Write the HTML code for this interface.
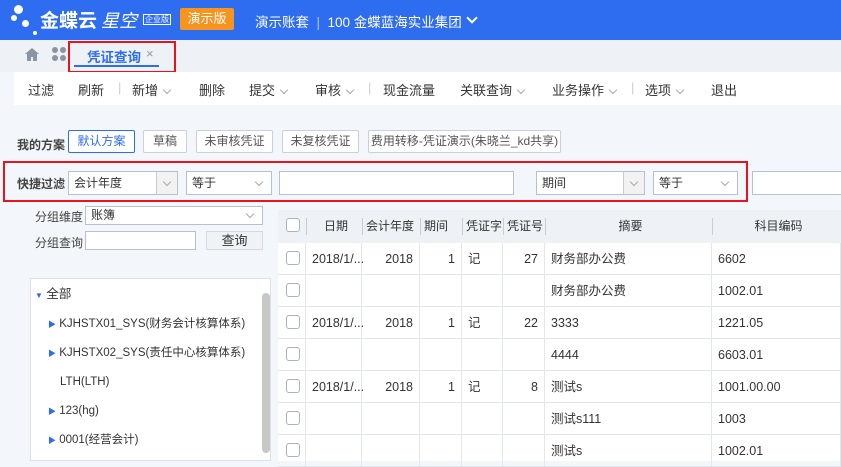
<!DOCTYPE html><html><head><meta charset="utf-8"><style>
*{margin:0;padding:0;box-sizing:border-box}
body{width:841px;height:461px;overflow:hidden;background:#f3f6fa;font-family:"Liberation Sans","Noto Sans CJK SC",sans-serif;font-size:12px;color:#333;position:relative}
.a{position:absolute}
.hd{left:0;top:0;width:841px;height:40px;background:#2e6cf0;color:#fff}
.tb{left:0;top:40px;width:841px;height:32px;background:#eef1f6}
.tool{left:14px;top:72px;width:827px;height:33px;background:#fff;font-size:13px}
.tool span{position:absolute;top:8px}
.cv{display:inline-block;width:6px;height:6px;border-right:1px solid #aaa;border-bottom:1px solid #aaa;transform:rotate(45deg);margin:0 0 4px 6px;vertical-align:middle}
.btn{position:absolute;top:130px;height:23px;border:1px solid #c9d0db;background:#fff;font-size:12px;color:#555;text-align:center;line-height:21px;border-radius:2px}
.inp{position:absolute;height:24px;border:1px solid #b8c0cc;background:#fff;font-size:12px;line-height:22px;padding-left:5px}
.inp .cv{position:absolute;right:9px;top:7px;margin:0}
.dd{position:absolute;right:0;top:0;width:21px;height:22px;border-left:1px solid #ccc;background:#f2f2f2}
.dd .cv{right:7px}
.grid{left:278px;top:210px;width:563px;height:251px;background:#fff}
.cell{position:absolute;height:32px;line-height:32px;font-size:12.5px;border-right:1px solid #e3e6ea;border-bottom:1px solid #e3e6ea}
.cb{position:absolute;width:14px;height:14px;border:1px solid #aab4c0;border-radius:3px;background:#fff}
.tr{position:absolute;font-size:11.5px;line-height:14px}
.tr i{color:#2e6cf0;font-size:8px;font-style:normal}
</style></head><body>
<div class="a hd">
 <div class="a" style="left:14px;top:5px;width:9px;height:9px;border-radius:50%;background:#fff"></div>
 <div class="a" style="left:11px;top:15px;width:6px;height:6px;border-radius:50%;background:#fff"></div>
 <div class="a" style="left:22px;top:20px;width:7px;height:7px;border-radius:50%;background:#fff"></div>
 <div class="a" style="left:33px;top:31px;width:4px;height:4px;border-radius:50%;background:#fff"></div>
 <div class="a" style="left:40px;top:6px;font-size:19px;font-weight:bold">金蝶云</div>
 <div class="a" style="left:101px;top:7px;font-size:18px;font-style:italic">星空</div>
 <div class="a" style="left:143px;top:14px;font-size:8px;border:1px solid #fff;padding:0 1px;line-height:9px">企业版</div>
 <div class="a" style="left:180px;top:8px;width:54px;height:22px;background:#f7941d;border-radius:2px;text-align:center;line-height:22px;font-size:13px">演示版</div>
 <div class="a" style="left:255px;top:11px;font-size:13.5px">演示账套 <span style="opacity:.6">&nbsp;|&nbsp;</span> 100 金蝶蓝海实业集团</div>
 <div class="a" style="left:468px;top:14px;width:8px;height:8px;border-right:2px solid #fff;border-bottom:2px solid #fff;transform:rotate(45deg)"></div>
</div>
<div class="a tb">
 <svg class="a" style="left:25px;top:8px" width="14" height="13" viewBox="0 0 14 13"><path d="M7 0L0 6h2v7h4V9h2v4h4V6h2z" fill="#8b94a3"/></svg>
 <svg class="a" style="left:52px;top:7px" width="14" height="14"><circle cx="3" cy="3" r="3" fill="#8b94a3"/><circle cx="11" cy="3" r="3" fill="#8b94a3"/><circle cx="3" cy="11" r="3" fill="#8b94a3"/><circle cx="11" cy="11" r="3" fill="#8b94a3"/></svg>
 <div class="a" style="left:87px;top:6px;font-size:13.5px;color:#2e6cf0;font-weight:bold">凭证查询</div>
 <div class="a" style="left:146px;top:6px;font-size:13px;color:#999">×</div>
 <div class="a" style="left:74px;top:25px;width:85px;height:2px;background:#2e6cf0"></div>
 <div class="a" style="left:68px;top:1px;width:108px;height:32px;border:2px solid #e8141c"></div>
</div>
<div class="a tool">
 <span style="left:14px">过滤</span><span style="left:64px">刷新</span><span style="left:104px;color:#ccc">|</span><span style="left:118px">新增<i class="cv"></i></span><span style="left:185px">删除</span><span style="left:235px">提交<i class="cv"></i></span><span style="left:301px">审核<i class="cv"></i></span><span style="left:354px;color:#ccc">|</span><span style="left:369px">现金流量</span><span style="left:446px">关联查询<i class="cv"></i></span><span style="left:538px">业务操作<i class="cv"></i></span><span style="left:617px;color:#ccc">|</span><span style="left:631px">选项<i class="cv"></i></span><span style="left:697px">退出</span>
</div>
<div class="a" style="left:17px;top:136px;font-size:12px;font-weight:bold;color:#444">我的方案</div>
<div class="btn" style="left:68px;width:67px;border-color:#2e6cf0;color:#2e6cf0">默认方案</div>
<div class="btn" style="left:143px;width:44px">草稿</div>
<div class="btn" style="left:196px;width:77px">未审核凭证</div>
<div class="btn" style="left:282px;width:77px">未复核凭证</div>
<div class="btn" style="left:368px;width:193px">费用转移-凭证演示(朱晓兰_kd共享)</div>
<div class="a" style="left:17px;top:175px;font-weight:bold;color:#444">快捷过滤</div>
<div class="inp" style="left:68px;top:171px;width:110px">会计年度<span class="dd"><i class="cv"></i></span></div>
<div class="inp" style="left:186px;top:171px;width:86px">等于<i class="cv"></i></div>
<div class="inp" style="left:279px;top:171px;width:235px"></div>
<div class="inp" style="left:536px;top:171px;width:109px">期间<span class="dd"><i class="cv"></i></span></div>
<div class="inp" style="left:653px;top:171px;width:85px">等于<i class="cv"></i></div>
<div class="inp" style="left:752px;top:171px;width:95px"></div>
<div class="a" style="left:3px;top:161px;width:745px;height:41px;border:2px solid #e8141c"></div>
<div class="a" style="left:35px;top:208px;color:#444">分组维度</div>
<div class="inp" style="left:85px;top:206px;width:178px;height:19px;line-height:17px">账簿<i class="cv" style="top:4px"></i></div>
<div class="a" style="left:35px;top:234px;color:#444">分组查询</div>
<div class="inp" style="left:85px;top:231px;width:111px;height:19px"></div>
<div class="a" style="left:206px;top:231px;width:57px;height:19px;background:#f0f2f5;border:1px solid #d5d9e0;text-align:center;line-height:17px;font-size:13px">查询</div>
<div class="a" style="left:30px;top:278px;width:241px;height:183px;background:#fff;border:1px solid #dde1e6">
 <div class="a" style="left:231px;top:14px;width:8px;height:160px;background:#c7c7c7;border-radius:4px"></div>
 <div class="tr" style="left:4px;top:8px;font-size:12.5px"><i>▼</i> 全部</div>
 <div class="tr" style="left:17px;top:38px"><i>▶</i> KJHSTX01_SYS(财务会计核算体系)</div>
 <div class="tr" style="left:17px;top:67px"><i>▶</i> KJHSTX02_SYS(责任中心核算体系)</div>
 <div class="tr" style="left:29px;top:96px">LTH(LTH)</div>
 <div class="tr" style="left:17px;top:125px"><i>▶</i> 123(hg)</div>
 <div class="tr" style="left:17px;top:154px"><i>▶</i> 0001(经营会计)</div>
</div>
<div class="a grid">
<div class="a" style="left:0;top:0;width:563px;height:33px;background:#eef1f6"></div>
<div id="g"></div>
</div>
<script>
var cols=[[0,28],[28,56],[84,58],[142,42],[184,41],[225,42],[267,167],[434,129]];
var hdr=["","日期","会计年度","期间","凭证字","凭证号","摘要","科目编码"];
var rows=[["2018/1/...","2018","1","记","27","财务部办公费","6602"],["","","","","","财务部办公费","1002.01"],["2018/1/...","2018","1","记","22","3333","1221.05"],["","","","","","4444","6603.01"],["2018/1/...","2018","1","记","8","测试s","1001.00.00"],["","","","","","测试s111","1003"],["","","","","","测试s","1002.01"]];
var al=["","left","right","right","left","right","left","left"];
var h="";
for(var c=1;c<8;c++){h+='<div class="cell" style="left:'+cols[c][0]+'px;top:0;width:'+cols[c][1]+'px;height:33px;border-right:none;border-bottom:none;text-align:'+(c==1||c==6||c==7?'center':'left')+';padding-left:4px;font-size:12px"><span style="position:absolute;left:0;top:8px;height:17px;border-left:1px solid #c8cdd4"></span>'+hdr[c]+'</div>';}
h+='<div class="cb" style="left:8px;top:8px"></div>';
for(var r=0;r<7;r++){var t=33+r*32;h+='<div class="cell" style="left:0;top:'+t+'px;width:28px"><div class="cb" style="left:8px;top:8px"></div></div>';
for(var c=1;c<8;c++){h+='<div class="cell" style="left:'+cols[c][0]+'px;top:'+t+'px;width:'+cols[c][1]+'px;text-align:'+al[c]+';padding:0 6px">'+rows[r][c-1]+'</div>';}}
document.getElementById("g").innerHTML=h;
</script>
</body></html>
